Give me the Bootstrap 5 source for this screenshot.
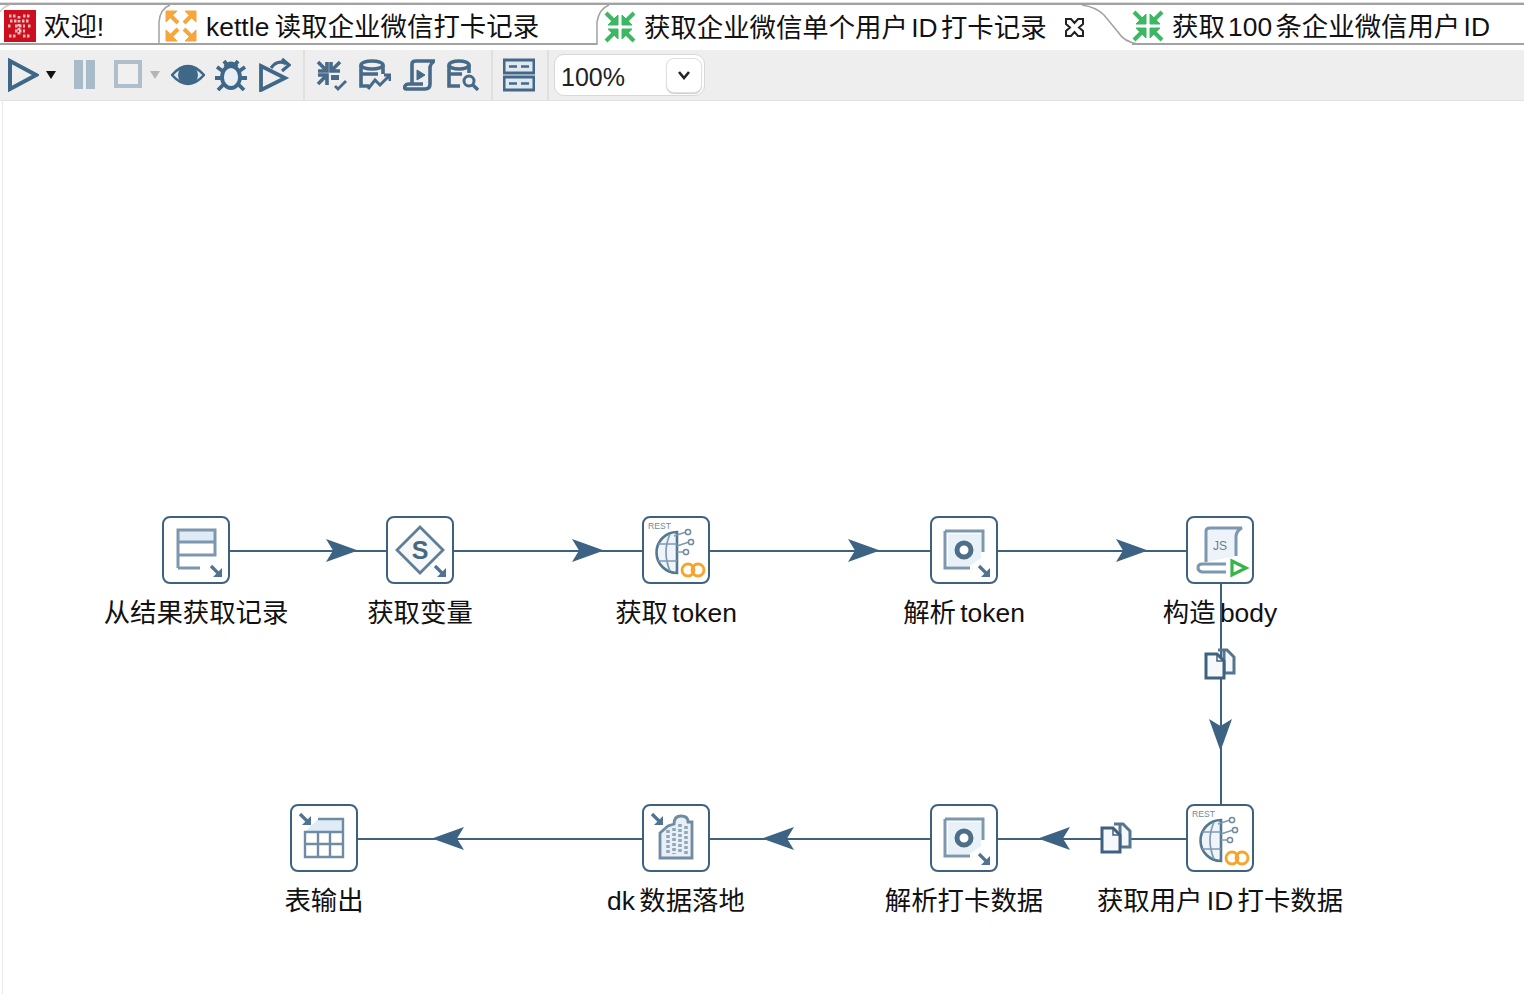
<!DOCTYPE html>
<html lang="zh-CN">
<head>
    <meta charset="UTF-8">
    <meta name="viewport" content="width=device-width, initial-scale=1.0">
    <link href="https://cdn.jsdelivr.net/npm/bootstrap@5.3.3/dist/css/bootstrap.min.css" rel="stylesheet">
    <title>获取企业微信单个用户 ID 打卡记录</title>
    <style>
        body { font-family: "Liberation Sans", "Noto Sans CJK SC", sans-serif; background: #fff; color: #111; overflow: hidden; }
        .shell { height: 994px; }

        /* tabs */
        .tabstrip { height: 50px; padding-top: 3px; background: #fff; position: relative; }
        .tabrow { height: 42px; border-top: 2px solid #a2a2a2; box-shadow: 0 -1px 0 #ddd; }
        .kt-tab { height: 40px; padding-top: 4px; font-size: 26.4px; line-height: 36px; word-spacing: -4px; white-space: nowrap; border-bottom: 2px solid #a2a2a2; gap: 8px; }
        .kt-tab svg { flex: none; }
        .kt-tab span { padding-top: 2px; }
        .tab-a { width: 158px; padding-left: 4px; }
        .tab-b { width: 439px; padding-left: 7px; gap: 9px; word-spacing: -2px; letter-spacing: .05px; }
        .tab-c { width: 535px; padding-left: 7px; border-bottom: 0; }
        .tab-d { flex: 1; padding-left: 0; }
        .tab-close { margin-left: 9px; }
        .tabcurves { position: absolute; left: 0; top: 0; pointer-events: none; }

        /* toolbar */
        .toolstrip { height: 51px; background: #eee; border-bottom: 1px solid #e2e2e2; padding-left: 7px; gap: 12px; flex: none; }
        .toolstrip svg { flex: none; }
        .tdrop { margin-left: -5px; }
        .tdrop-b { margin-left: -6px; margin-right: -1px; }
        .teye { margin-right: -2px; }
        .tshift { margin-left: -2px; }
        .tsep { width: 2px; height: 50px; background: #e0e0e0; }
        .zoombox { width: 151px; height: 42px; background: #fff; border: 1px solid #d8d8d8; border-radius: 10px; font-size: 25px; color: #222; padding: 0 2px 0 6px; margin-left: -7px; }
        .zoomval { padding-top: 5px; }
        .zoombtn { width: 36px; height: 35px; border: 1px solid #e0e0e0; border-radius: 8px; box-shadow: 0 1px 1px #ccc; }

        /* canvas */
        .flow { position: relative; flex: 1; }
        .flow::before { content: ""; position: absolute; left: 2px; top: 0; bottom: 0; width: 1px; background: #e8e8e8; }
        .flow-lines { position: absolute; left: 0; top: -101px; pointer-events: none; z-index: 2; }
        .step { position: absolute; width: 320px; }
        .stepbox { width: 68px; height: 68px; background: #fff; border: 2px solid #3f6180; border-radius: 8px; }
        .stepname { font-size: 26.4px; line-height: 32px; margin-top: 13px; word-spacing: -3px; white-space: nowrap; }
        .ico-txt { font-family: "Liberation Sans", sans-serif; }
    </style>
</head>
<body>
<svg width="0" height="0" class="d-block">
    <defs>
        <g id="arrow-in" fill="#3db862" stroke="#3db862">
            <path d="M14 14V4L4 14Z" stroke-width="1"/><path d="M2 2 10 10" stroke-width="4"/>
            <path d="M18 14V4L28 14Z" stroke-width="1"/><path d="M30 2 22 10" stroke-width="4"/>
            <path d="M14 18V28L4 18Z" stroke-width="1"/><path d="M2 30 10 22" stroke-width="4"/>
            <path d="M18 18V28L28 18Z" stroke-width="1"/><path d="M30 30 22 22" stroke-width="4"/>
        </g>
        <g id="arrow-out" fill="#f7a63e" stroke="#f7a63e">
            <path d="M1 1H12L1 12Z" stroke-width="1"/><path d="M5 5 13 13" stroke-width="4"/>
            <path d="M31 1H20L31 12Z" stroke-width="1"/><path d="M27 5 19 13" stroke-width="4"/>
            <path d="M1 31H12L1 20Z" stroke-width="1"/><path d="M5 27 13 19" stroke-width="4"/>
            <path d="M31 31H20L31 20Z" stroke-width="1"/><path d="M27 27 19 19" stroke-width="4"/>
        </g>
        <g id="mini-arrow">
            <path d="M1 1 8 8" stroke="#4f7391" stroke-width="3.2"/>
            <path d="M12 3V12H3Z" fill="#4f7391"/>
        </g>
        <g id="rest">
            <text x="4" y="11" font-size="8.6" fill="#6f899e" class="ico-txt">REST</text>
            <path d="M33 14A20.500 20.500 0 0 0 33 55Z" fill="#eef4f9" stroke="#557891" stroke-width="2.6"/>
            <path d="M26 16Q18 34 26 53M14 26H33M14 43H33" fill="none" stroke="#7f9aaf" stroke-width="1.7"/>
            <path d="M30 18 42 14M33 28 45 24M33 34 40 34" fill="none" stroke="#7f9aaf" stroke-width="1.7"/>
            <circle cx="44" cy="14" r="2.6" fill="#fff" stroke="#6f899e" stroke-width="1.5"/><circle cx="47" cy="24" r="2.6" fill="#fff" stroke="#6f899e" stroke-width="1.5"/><circle cx="42" cy="34" r="2.6" fill="#fff" stroke="#6f899e" stroke-width="1.5"/>
            <circle cx="44" cy="52" r="6" fill="none" stroke="#f6a52c" stroke-width="2.8"/><circle cx="54" cy="52" r="6" fill="none" stroke="#f6a52c" stroke-width="2.8"/>
        </g>
        <g id="parse">
            <path d="M16 16H49V40L38 48H16Z" fill="#e8f1f8"/>
            <path d="M13 13H51V34M38 50H13V13" fill="none" stroke="#7d98ae" stroke-width="3"/>
            <circle cx="32" cy="32" r="7" fill="#fff" stroke="#4f6f88" stroke-width="5"/>
            <use href="#mini-arrow" x="46" y="47"/>
        </g>
        <g id="copies" fill="#f6f9fb" stroke="#3f6180" stroke-width="3">
            <path d="M14 2H23L30 9V25H20V2Z" stroke="#56758f"/>
            <path d="M2 6H13L20 13V30H2Z"/>
            <path d="M13 6V13H20" fill="none" stroke-width="1.5"/>
        </g>
    </defs>
</svg>

<div class="shell d-flex flex-column">
    <div class="tabstrip">
        <div class="tabrow d-flex">
            <div class="kt-tab tab-a d-flex align-items-center">
                <svg width="32" height="32" viewBox="0 0 32 32"><rect width="32" height="32" fill="#cc0f1f"/><path d="M5 6H13M19 6H27M6 11H14M18 11H26M11 16H21M11 21H21M5 26H13M19 26H27M4 16H8M24 16H28M15 6V26" fill="none" stroke="#f6b9bd" stroke-width="2.8" stroke-dasharray="2.500 1.500"/></svg>
                <span>欢迎!</span>
            </div>
            <div class="kt-tab tab-b d-flex align-items-center">
                <svg width="32" height="32" viewBox="0 0 32 32"><use href="#arrow-out"/></svg>
                <span>kettle 读取企业微信打卡记录</span>
            </div>
            <div class="kt-tab tab-c d-flex align-items-center">
                <svg width="32" height="32" viewBox="0 0 32 32"><use href="#arrow-in"/></svg>
                <span>获取企业微信单个用户 ID 打卡记录</span>
                <svg class="tab-close" width="21" height="21" viewBox="0 0 21 21" fill="#fff" stroke="#222" stroke-width="2"><path d="M2 2H7L10.500 6 14 2H19V7L15 10.500 19 14V19H14L10.500 15 7 19H2V14L6 10.500 2 7Z"/></svg>
            </div>
            <div class="kt-tab tab-d d-flex align-items-center">
                <svg width="32" height="32" viewBox="0 0 32 32"><use href="#arrow-in"/></svg>
                <span>获取 100 条企业微信用户 ID</span>
            </div>
        </div>
        <svg class="tabcurves" width="1524" height="50" fill="none" stroke="#a2a2a2" stroke-width="1.5">
            <path d="M0 12Q4 6 10 5" stroke="#ccc"/>
            <path d="M159 44V22Q160 9 170 5"/>
            <path d="M597 45V22Q599 9 609 5"/>
            <path d="M1082 5Q1096 7 1104 15L1118 32Q1124 42 1138 44"/>
        </svg>
    </div>

    <div class="toolstrip d-flex align-items-center">
        <svg width="32" height="34" viewBox="0 0 32 34" fill="none" stroke="#3f6788" stroke-width="4"><path d="M3 3 29 17 3 31Z"/></svg>
        <svg width="10" height="8" viewBox="0 0 10 8" class="tdrop"><path d="M0 0H10L5 8Z" fill="#111"/></svg>
        <svg width="32" height="32" viewBox="0 0 32 32" fill="#a9bac8"><rect x="6" y="1" width="9" height="29"/><rect x="18" y="1" width="9" height="29"/></svg>
        <svg width="32" height="32" viewBox="0 0 32 32" fill="#f0f0f0" stroke="#aebecb" stroke-width="4"><rect x="4" y="3" width="24" height="24"/></svg>
        <svg width="10" height="8" viewBox="0 0 10 8" class="tdrop-b"><path d="M0 0H10L5 8Z" fill="#b5b5b5"/></svg>
        <svg width="34" height="32" viewBox="0 0 34 32" class="teye"><path d="M1 16Q17 -2 33 16 17 34 1 16Z" fill="#dfe8ef" stroke="#3f6788" stroke-width="2.6"/><circle cx="17" cy="16" r="10" fill="#3f6788"/></svg>
        <svg width="32" height="32" viewBox="0 0 32 32" fill="none" stroke="#3f6788" stroke-width="3.800"><ellipse cx="16" cy="18" rx="9" ry="11" fill="#e8eef3"/><path d="M10 8Q16 1 22 8M9 13 2 8M23 13 30 8M8 19H0M24 19H32M9 25 3 31M23 25 29 31M9 2 12 6M23 2 20 6"/></svg>
        <svg width="32" height="34" viewBox="0 0 32 34" fill="none" stroke="#3f6788" stroke-width="3.800"><path d="M2 8 26 20 2 32Z"/><path d="M12 10Q19 1 27 6" stroke-width="3.200"/><path d="M23 1 30 7 23 13" stroke-width="3.200"/></svg>
        <div class="tsep"></div>
        <svg width="32" height="32" viewBox="0 0 32 32" class="tshift" fill="none" stroke="#466a88" stroke-width="3.600"><path d="M3 3 10 10M12 3V12H3M25 3 18 10M16 3V12H25M3 25 10 18M12 26V16H3"/><path d="M16 16H24V21H16Z" fill="#466a88" stroke="none"/><path d="M20 27 23 30 31 22" stroke-width="2.800"/></svg>
        <svg width="32" height="32" viewBox="0 0 32 32" fill="none" stroke="#466a88" stroke-width="3.600"><ellipse cx="13" cy="6" rx="11" ry="4"/><path d="M2 6V27H10M24 6V15M2 15H19"/><path d="M9 30 16 21 21 26 31 16M25 16H31V22" stroke-width="3"/></svg>
        <svg width="32" height="32" viewBox="0 0 32 32" fill="none" stroke="#466a88" stroke-width="3.600"><path d="M9 26V5Q9 2 13 2H31Q28 4 27 8V25Q27 30 22 30H3Q1 30 2 27 3 25 6 25H20"/><path d="M14 11 22 16 14 21Z" fill="#466a88" stroke-width="1"/></svg>
        <svg width="32" height="32" viewBox="0 0 32 32" fill="none" stroke="#466a88" stroke-width="3.600"><ellipse cx="12" cy="6" rx="10" ry="4"/><path d="M2 6V27H13M22 6V14M2 15H15"/><circle cx="22" cy="22" r="5" stroke-width="3"/><path d="M26 26 31 31" stroke-width="3.400"/></svg>
        <div class="tsep"></div>
        <svg width="32" height="34" viewBox="0 0 32 34" class="tshift"><rect x="1" y="2" width="30" height="13" fill="#dfe8ef" stroke="#44688a" stroke-width="3"/><rect x="1" y="19" width="30" height="13" fill="#dfe8ef" stroke="#44688a" stroke-width="3"/><path d="M6 8.500H14M18 8.500H26M6 25.500H14M18 25.500H26" stroke="#44688a" stroke-width="2.400"/></svg>
        <div class="tsep"></div>
        <div class="zoombox d-flex align-items-center justify-content-between">
            <span class="zoomval">100%</span>
            <div class="zoombtn d-flex align-items-center justify-content-center bg-white">
                <svg width="14" height="9" viewBox="0 0 14 9" fill="none" stroke="#222" stroke-width="2.600"><path d="M2 1 7 7 12 1"/></svg>
            </div>
        </div>
    </div>

    <div class="flow" id="flow">
        <svg class="flow-lines" width="1524" height="994" id="lines">
            <g stroke="#3f6180" stroke-width="2" fill="none">
                <path d="M230 551H386M454 551H642M710 551H930M998 551H1186M1221 584V804"/>
                <path d="M358 839H642M710 839H930M998 839H1186"/>
            </g>
            <g fill="#3d6384">
                <path d="M358 550.500 326 539 333 550.500 326 562Z"/>
                <path d="M604 550.500 572 539 579 550.500 572 562Z"/>
                <path d="M880 550.500 848 539 855 550.500 848 562Z"/>
                <path d="M1148 550.500 1116 539 1123 550.500 1116 562Z"/>
                <path d="M1220.500 751 1209 719 1220.500 726 1232 719Z"/>
                <path d="M432 838.500 464 827 457 838.500 464 850Z"/>
                <path d="M762 838.500 794 827 787 838.500 794 850Z"/>
                <path d="M1038 838.500 1070 827 1063 838.500 1070 850Z"/>
            </g>
            <use href="#copies" x="1204" y="648"/>
            <use href="#copies" x="1100" y="822"/>
        </svg>
    </div>
</div>

<script>
    // step icons, drawn inside the 64x64 box
    let icons = {
        input: '<path d="M13 12H52V24H13Z" fill="#dfecf7"/><path d="M14 50V12H51V37H14M14 24H51M14 50H36" fill="none" stroke="#7d98ae" stroke-width="3"/><use href="#mini-arrow" x="46" y="47"/>',
        vars: '<path d="M32 9 55 32 32 55 9 32Z" fill="#f5f7f9" stroke="#5f7f98" stroke-width="2.800"/><text x="32" y="41" font-size="25" font-weight="700" text-anchor="middle" fill="#47697f" class="ico-txt">S</text><use href="#mini-arrow" x="46" y="47"/>',
        rest: '<use href="#rest"/>',
        parse: '<use href="#parse"/>',
        js: '<path d="M18 44V13Q18 10 22 10H54Q49 12 48 18V38" fill="#edf3f9" stroke="#7d98ae" stroke-width="3"/><path d="M38 46H14Q10 46 10 50 10 53 14 54H38" fill="none" stroke="#7d98ae" stroke-width="3"/><text x="25" y="32" font-size="12" fill="#5f7f98" class="ico-txt">JS</text><path d="M44 43 58 50 44 57Z" fill="none" stroke="#37b54a" stroke-width="3.200"/>',
        table: '<use href="#mini-arrow" x="7" y="7"/><path d="M26 13H51V26H13Z" fill="#dfecf7"/><path d="M26 13H51V51H13V26H51M13 38H51M26 26V51M38 26V51" fill="none" stroke="#6f8ca3" stroke-width="2.400"/>',
        dk: '<use href="#mini-arrow" x="7" y="7"/><path d="M16 27 24 20 30 18Q30 10 37 10 44 10 44 16H48V52H16Z" fill="#e9eff4" stroke="#6f8ca3" stroke-width="2.800"/><path d="M24 24V48M30 22V48M36 18V48M42 20V48" stroke="#8fa7bb" stroke-width="3.500" stroke-dasharray="3 2"/>'
    };

    let steps = [
        { x: 196, y: 516, icon: "input", name: "从结果获取记录" },
        { x: 420, y: 516, icon: "vars", name: "获取变量" },
        { x: 676, y: 516, icon: "rest", name: "获取 token" },
        { x: 964, y: 516, icon: "parse", name: "解析 token" },
        { x: 1220, y: 516, icon: "js", name: "构造 body" },
        { x: 324, y: 804, icon: "table", name: "表输出" },
        { x: 676, y: 804, icon: "dk", name: "dk 数据落地" },
        { x: 964, y: 804, icon: "parse", name: "解析打卡数据" },
        { x: 1220, y: 804, icon: "rest", name: "获取用户 ID 打卡数据" }
    ];

    let flow = document.getElementById("flow");
    for (let i = 0; i < steps.length; i++) {
        let s = steps[i];
        let el = document.createElement("div");
        el.className = "step d-flex flex-column align-items-center";
        el.style.left = (s.x - 160) + "px";
        el.style.top = (s.y - 101) + "px";
        el.innerHTML = '<div class="stepbox"><svg width="64" height="64" viewBox="0 0 64 64" class="d-block">' + icons[s.icon] + '</svg></div>' +
            '<div class="stepname">' + s.name + '</div>';
        flow.appendChild(el);
    }
</script>
<script src="https://cdn.jsdelivr.net/npm/bootstrap@5.3.3/dist/js/bootstrap.bundle.min.js"></script>
</body>
</html>
